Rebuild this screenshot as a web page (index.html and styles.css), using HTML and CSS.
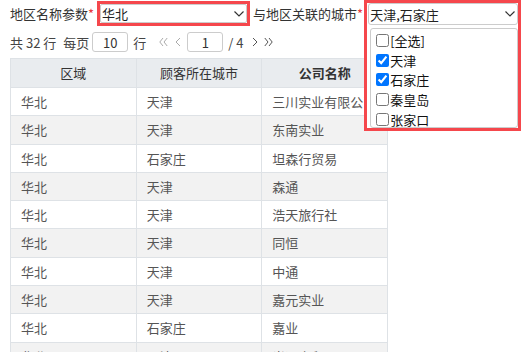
FILE: index.html
```html
<!DOCTYPE html>
<html lang="zh-CN">
<head>
  <meta charset="UTF-8" />
  <title>地区城市联动</title>
  <link rel="stylesheet" href="styles.css">
</head>
<body>
  <div class="toolbar">
    <span class="label">地区名称参数<span class="req">*</span></span>
    <div class="mark first-mark">
      <div class="select">
        <span>华北</span>
        <svg class="caret" width="10" height="6" viewBox="0 0 10 6"><polyline points="0.5,0.5 5,5 9.5,0.5" fill="none" stroke="#333" stroke-width="1.2"/></svg>
      </div>
    </div>
    <span class="label label-2">与地区关联的城市<span class="req">*</span></span>
    <div class="mark combo">
      <div class="select select-2">
        <span>天津,石家庄</span>
        <svg class="caret" width="10" height="6" viewBox="0 0 10 6"><polyline points="0.5,0.5 5,5 9.5,0.5" fill="none" stroke="#333" stroke-width="1.2"/></svg>
      </div>
      <ul class="dropdown">
        <li><input type="checkbox">[全选]</li>
        <li><input type="checkbox" checked>天津</li>
        <li><input type="checkbox" checked>石家庄</li>
        <li><input type="checkbox">秦皇岛</li>
        <li><input type="checkbox">张家口</li>
      </ul>
    </div>
  </div>

  <div class="pager">
    <span class="total">共 32 行</span>
    <span class="per">每页</span>
    <input class="num" type="text" value="10">
    <span>行</span>
    <svg class="nav first" width="9" height="10" viewBox="0 0 9 10"><polyline points="4,1 0.8,5 4,9" fill="none" stroke="#aaa" stroke-width="1"/><polyline points="8.2,1 5,5 8.2,9" fill="none" stroke="#aaa" stroke-width="1"/></svg>
    <svg class="nav prev" width="6" height="10" viewBox="0 0 6 10"><polyline points="5,1 1,5 5,9" fill="none" stroke="#aaa" stroke-width="1"/></svg>
    <input class="num page" type="text" value="1">
    <span class="count">/ 4</span>
    <svg class="nav next" width="6" height="10" viewBox="0 0 6 10"><polyline points="1,1 5,5 1,9" fill="none" stroke="#555" stroke-width="1"/></svg>
    <svg class="nav last" width="9" height="10" viewBox="0 0 9 10"><polyline points="0.8,1 4,5 0.8,9" fill="none" stroke="#555" stroke-width="1"/><polyline points="5,1 8.2,5 5,9" fill="none" stroke="#555" stroke-width="1"/></svg>
  </div>

  <table class="grid">
    <thead>
      <tr><th>区域</th><th>顾客所在城市</th><th class="strong">公司名称</th></tr>
    </thead>
    <tbody>
      <tr><td>华北</td><td>天津</td><td>三川实业有限公司</td></tr>
      <tr><td>华北</td><td>天津</td><td>东南实业</td></tr>
      <tr><td>华北</td><td>石家庄</td><td>坦森行贸易</td></tr>
      <tr><td>华北</td><td>天津</td><td>森通</td></tr>
      <tr><td>华北</td><td>天津</td><td>浩天旅行社</td></tr>
      <tr><td>华北</td><td>天津</td><td>同恒</td></tr>
      <tr><td>华北</td><td>天津</td><td>中通</td></tr>
      <tr><td>华北</td><td>天津</td><td>嘉元实业</td></tr>
      <tr><td>华北</td><td>石家庄</td><td>嘉业</td></tr>
      <tr><td>华北</td><td>天津</td><td>光远商贸</td></tr>
    </tbody>
  </table>
</body>
</html>
```

FILE: styles.css
```css
body {
  margin: 0;
  padding: 0 10px;
  font-family: "Noto Sans CJK SC", "Noto Sans", sans-serif;
  font-size: 13px;
  color: #333;
  background: #fff;
}
.toolbar {
  display: flex;
  align-items: flex-start;
  height: 26px;
  padding-top: 1px;
}
.label {
  line-height: 25px;
  white-space: nowrap;
}
.req {
  color: #e8383d;
}
.label-2 {
  margin-left: 3px;
}
.mark {
  border: 3px solid #f5474c;
  background: #fff;
}
.first-mark {
  margin-left: 3px;
}
.select {
  box-sizing: border-box;
  width: 147px;
  height: 19px;
  border: 1px solid #ccc;
  border-radius: 2px;
  display: flex;
  align-items: center;
  justify-content: space-between;
  padding: 0 2px 0 1px;
  line-height: 17px;
  color: #222;
}
.combo {
  position: relative;
  z-index: 2;
  width: 153px;
  margin-top: -1px;
  margin-left: 1px;
}
.select-2 {
  width: 150px;
  height: 22px;
  margin-left: 1px;
  border-radius: 3px;
}
.dropdown {
  list-style: none;
  box-sizing: border-box;
  width: 148px;
  height: 100px;
  margin: 3px 0 0 3px;
  padding: 2px 5px;
  border: 1px solid #ccc;
  border-radius: 3px;
  color: #111;
}
.dropdown li {
  display: flex;
  align-items: center;
  height: 19.6px;
}
.dropdown input {
  width: 13px;
  height: 13px;
  margin: 0 1px 0 0;
}
.pager {
  display: flex;
  align-items: center;
  height: 20px;
  margin-top: 5px;
  color: #444;
  white-space: pre;
}
.per {
  margin-left: 7px;
}
.num {
  box-sizing: border-box;
  width: 36px;
  height: 20px;
  margin: 0 5px 0 3px;
  border: 1px solid #ccc;
  border-radius: 3px;
  font: inherit;
  color: #333;
  text-align: center;
  padding: 0;
}
.nav {
  flex: none;
}
.first {
  margin-left: 13px;
}
.prev {
  margin-left: 7px;
  margin-right: 3px;
}
.page {
  margin-right: 5px;
}
.next {
  margin-left: 8px;
}
.last {
  margin-left: 6px;
}
.grid {
  width: 378px;
  margin-top: 6px;
  border-collapse: collapse;
  table-layout: fixed;
}
.grid th,
.grid td {
  border: 1px solid #dee2e6;
  padding: 6px 10px;
  white-space: nowrap;
  overflow: hidden;
}
.grid th {
  background: #e9ecef;
  font-weight: normal;
  line-height: 16px;
  color: #333;
}
.grid th.strong {
  font-weight: bold;
}
.grid td {
  line-height: 15.3px;
  color: #555;
}
.grid tbody tr:nth-child(even) td {
  background: #f2f2f2;
}
```
